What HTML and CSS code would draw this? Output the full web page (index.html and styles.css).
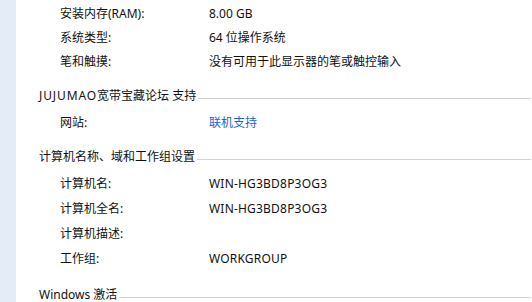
FILE: index.html
```html
<!DOCTYPE html>
<html lang="zh-CN">
<head>
<meta charset="utf-8">
<title>系统</title>
<link rel="stylesheet" href="styles.css">
</head>
<body>
<div class="page">
  <aside class="sidebar"></aside>
  <main class="content">
    <section class="group group-first">
      <div class="row"><span class="label">安装内存(RAM):</span><span class="value">8.00 GB</span></div>
      <div class="row"><span class="label">系统类型:</span><span class="value">64 位操作系统</span></div>
      <div class="row"><span class="label">笔和触摸:</span><span class="value">没有可用于此显示器的笔或触控输入</span></div>
    </section>
    <section class="group group-support">
      <div class="heading"><span class="heading-text"><span class="latin-wide">JUJUMAO</span>宽带宝藏论坛 支持</span><span class="rule"></span></div>
      <div class="row row-site"><span class="label">网站:</span><a class="value link" href="#">联机支持</a></div>
    </section>
    <section class="group group-computer">
      <div class="heading"><span class="heading-text">计算机名称、域和工作组设置</span><span class="rule"></span></div>
      <div class="row row-tall row-first"><span class="label">计算机名:</span><span class="value latin">WIN-HG3BD8P3OG3</span></div>
      <div class="row row-tall"><span class="label">计算机全名:</span><span class="value latin">WIN-HG3BD8P3OG3</span></div>
      <div class="row row-tall"><span class="label">计算机描述:</span><span class="value"></span></div>
      <div class="row row-tall"><span class="label">工作组:</span><span class="value latin">WORKGROUP</span></div>
    </section>
    <section class="group group-activation">
      <div class="heading"><span class="heading-text">Windows 激活</span><span class="rule"></span></div>
    </section>
  </main>
</div>
</body>
</html>
```
FILE: styles.css
```css
html, body {
  margin: 0;
  padding: 0;
  background: #ffffff;
}
body {
  font-family: "Noto Sans", "Noto Sans CJK SC", sans-serif;
  font-size: 12px;
  color: #111111;
}
.page {
  display: flex;
  width: 532px;
  height: 302px;
  overflow: hidden;
}
.sidebar {
  width: 16px;
  flex: none;
  background: #e3ecf7;
}
.content {
  flex: 1;
  padding-left: 23px;
  padding-top: 2px;
}
.row {
  display: flex;
  height: 24px;
  line-height: 24px;
  padding-left: 21px;
  white-space: nowrap;
}
.row-tall {
  height: 25px;
  line-height: 25px;
}
.label {
  width: 149px;
  flex: none;
}
.value {
  color: #111111;
}
.latin {
  letter-spacing: 0.2px;
}
.latin-wide {
  letter-spacing: 0.9px;
}
.link {
  color: #1a64d2;
  text-decoration: none;
}
.heading {
  display: flex;
  align-items: center;
  height: 24px;
  line-height: 24px;
  white-space: nowrap;
}
.heading-text {
  flex: none;
  padding-right: 2px;
}
.rule {
  flex: 1;
  height: 0;
  border-top: 1px solid #d3d3d3;
  margin-top: 5px;
  margin-right: 1px;
}
.group-support {
  margin-top: 10px;
}
.row-site {
  margin-top: 3px;
}
.group-computer {
  margin-top: 10px;
}
.row-first {
  margin-top: 2px;
}
.group-activation {
  margin-top: 12px;
}
```
